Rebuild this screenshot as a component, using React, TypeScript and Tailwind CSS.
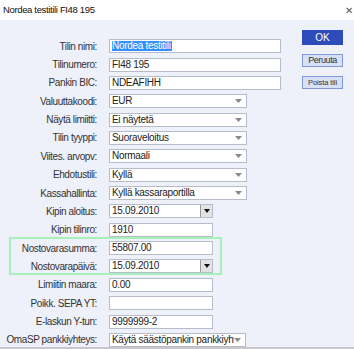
import React from 'react';

type Field =
  | { label: string; kind: 'text'; value: string; width: string; selected?: boolean }
  | { label: string; kind: 'select'; value: string; width: string }
  | { label: string; kind: 'date'; value: string };

const rowsTop: Field[] = [
  { label: 'Tilin nimi:', kind: 'text', value: 'Nordea testitili', width: 'w-[172px]', selected: true },
  { label: 'Tilinumero:', kind: 'text', value: 'FI48 195', width: 'w-[172px]' },
  { label: 'Pankin BIC:', kind: 'text', value: 'NDEAFIHH', width: 'w-[172px]' },
  { label: 'Valuuttakoodi:', kind: 'select', value: 'EUR', width: 'w-[138px]' },
  { label: 'Näytä limiitti:', kind: 'select', value: 'Ei näytetä', width: 'w-[138px]' },
  { label: 'Tilin tyyppi:', kind: 'select', value: 'Suoraveloitus', width: 'w-[138px]' },
  { label: 'Viites. arvopv:', kind: 'select', value: 'Normaali', width: 'w-[138px]' },
  { label: 'Ehdotustili:', kind: 'select', value: 'Kyllä', width: 'w-[138px]' },
  { label: 'Kassahallinta:', kind: 'select', value: 'Kyllä kassaraportilla', width: 'w-[138px]' },
  { label: 'Kipin aloitus:', kind: 'date', value: '15.09.2010' },
  { label: 'Kipin tilinro:', kind: 'text', value: '1910', width: 'w-[104px]' },
];

const rowsHighlighted: Field[] = [
  { label: 'Nostovarasumma:', kind: 'text', value: '55807.00', width: 'w-[104px]' },
  { label: 'Nostovarapäivä:', kind: 'date', value: '15.09.2010' },
];

const rowsBottom: Field[] = [
  { label: 'Limiitin maara:', kind: 'text', value: '0.00', width: 'w-[104px]' },
  { label: 'Poikk. SEPA YT:', kind: 'text', value: '', width: 'w-[104px]' },
  { label: 'E-laskun Y-tun:', kind: 'text', value: '9999999-2', width: 'w-[104px]' },
  { label: 'OmaSP pankkiyhteys:', kind: 'select', value: 'Käytä säästöpankin pankkiyhteys', width: 'w-[137px]' },
];

const Arrow = () => (
  <svg width="7" height="4" viewBox="0 0 7 4" className="shrink-0">
    <path d="M0 0 L7 0 L3.5 4 Z" fill="#8a8a8a" />
  </svg>
);

const Row: React.FC<{ f: Field }> = ({ f }) => (
  <div className="flex items-center h-[18.36px]">
    <div className="w-[97px] shrink-0 text-right text-[10px] tracking-[-0.4px] text-[#333] whitespace-nowrap">{f.label}</div>
    <div className="ml-[12px] text-[10px] tracking-[-0.3px]">
      {f.kind === 'text' && (
        <div className={`${f.width} h-[14px] bg-white border border-[#b7bccb] flex items-center px-[2px] text-[#222] leading-none whitespace-nowrap`}>
          {f.selected ? <span className="bg-[#3390ff] text-white pr-[1px]">{f.value}</span> : f.value}
        </div>
      )}
      {f.kind === 'select' && (
        <div className={`${f.width} h-[14px] bg-white border border-[#b7bccb] flex items-center pl-[2px] pr-[4px] text-[#222] leading-none overflow-hidden`}>
          <span className="flex-1 whitespace-nowrap overflow-hidden">{f.value}</span>
          <Arrow />
        </div>
      )}
      {f.kind === 'date' && (
        <div className="w-[104px] h-[14px] bg-white border border-[#b7bccb] flex items-center text-[#222] leading-none">
          <span className="flex-1 pl-[2px]">{f.value}</span>
          <div className="w-[12px] h-full bg-[#e3e3e3] border-l border-[#9a9a9a] flex items-center justify-center">
            <svg width="6" height="4" viewBox="0 0 6 4">
              <path d="M0 0 L6 0 L3 4 Z" fill="#111" />
            </svg>
          </div>
        </div>
      )}
    </div>
  </div>
);

export default function App() {
  return (
    <div className="w-[354px] h-[349px] overflow-hidden flex flex-col" style={{ fontFamily: '"Liberation Sans", Arial, sans-serif' }}>
      <div className="h-[20px] bg-white flex items-center justify-between pl-[3px] pr-[1px] shrink-0">
        <span className="text-[9.5px] tracking-[-0.35px] text-[#111]">Nordea testitili FI48 195</span>
        <span className="text-[10px] text-[#555]">✕</span>
      </div>
      <div className="flex-1 bg-[#eef0fa] flex relative">
        <div className="flex flex-col pt-[17px]">
          {rowsTop.map((f) => (
            <Row key={f.label} f={f} />
          ))}
          <div className="relative">
            <div className="absolute left-[9px] top-[-2px] w-[213px] h-[38px] border-2 border-[#a6f0ba] pointer-events-none" />
            {rowsHighlighted.map((f) => (
              <Row key={f.label} f={f} />
            ))}
          </div>
          {rowsBottom.map((f) => (
            <Row key={f.label} f={f} />
          ))}
        </div>
        <div className="ml-auto mr-[11px] pt-[10px] flex flex-col gap-[9px]">
          <div className="w-[41px] h-[15px] bg-[#2d4cb9] text-white text-[10px] flex items-center justify-center">OK</div>
          <div className="w-[41px] h-[13px] bg-[#d6e0f7] border border-[#8398d8] text-[#333] text-[9px] tracking-[-0.4px] flex items-center justify-center">Peruuta</div>
          <div className="w-[41px] h-[13px] bg-[#d6e0f7] border border-[#8398d8] text-[#333] text-[7.5px] tracking-[-0.1px] flex items-center justify-center whitespace-nowrap">Poista tili</div>
        </div>
        <div className="absolute left-0 right-0 bottom-0 h-[2px] bg-[#c8c8cc]" />
      </div>
    </div>
  );
}
